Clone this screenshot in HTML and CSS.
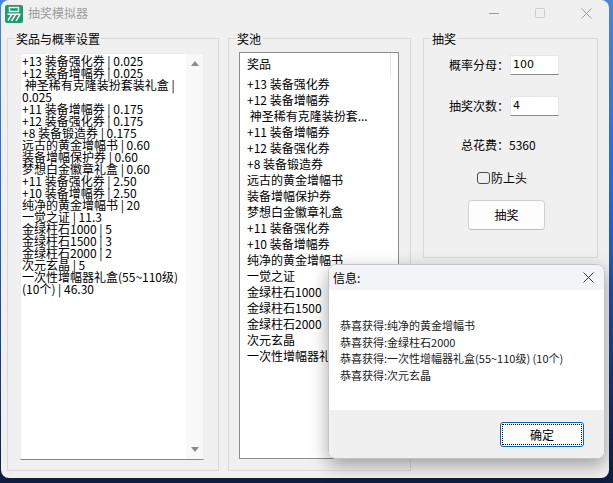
FILE: index.html
```html
<!DOCTYPE html>
<html lang="zh-CN">
<head>
<meta charset="utf-8">
<title>抽奖模拟器</title>
<link rel="stylesheet" href="styles.css">
</head>
<body>
<div class="window">
  <div class="titlebar">
    <svg class="appicon" viewBox="0 0 18 18" width="18" height="18">
      <rect x="0" y="0" width="18" height="18" rx="2" fill="#1f9b72"/>
      <rect x="4.5" y="2.5" width="9" height="4" fill="none" stroke="#fff" stroke-width="1.4"/>
      <path d="M2.5 9.2H15.5M7 9.2L3 15.5M11 9.2L6.5 16M15.2 9.2L11 16" stroke="#fff" stroke-width="1.4" fill="none"/>
    </svg>
    <span class="title">抽奖模拟器</span>
    <div class="controls">
      <span class="ctl">
        <svg viewBox="0 0 10 10" width="10" height="10"><path d="M0 5.5H10" stroke="#9a9a9a" stroke-width="1"/></svg>
      </span>
      <span class="ctl">
        <svg viewBox="0 0 10 10" width="10" height="10"><rect x="0.5" y="0.5" width="9" height="9" rx="1" fill="none" stroke="#cfcfcf" stroke-width="1"/></svg>
      </span>
      <span class="ctl">
        <svg viewBox="0 0 11 11" width="11" height="11"><path d="M0.5 0.5L10.5 10.5M10.5 0.5L0.5 10.5" stroke="#9a9a9a" stroke-width="1"/></svg>
      </span>
    </div>
  </div>

  <div class="content">
    <fieldset class="group g1">
      <legend>奖品与概率设置</legend>
      <div class="memo">
        <div class="memo-text">
          <div class="ln">+13 装备强化券 | 0.025</div>
          <div class="ln">+12 装备增幅券 | 0.025</div>
          <div class="ln"> 神圣稀有克隆装扮套装礼盒 |</div>
          <div class="ln">0.025</div>
          <div class="ln">+11 装备增幅券 | 0.175</div>
          <div class="ln">+12 装备强化券 | 0.175</div>
          <div class="ln">+8 装备锻造券 | 0.175</div>
          <div class="ln">远古的黄金增幅书 | 0.60</div>
          <div class="ln">装备增幅保护券 | 0.60</div>
          <div class="ln">梦想白金徽章礼盒 | 0.60</div>
          <div class="ln">+11 装备强化券 | 2.50</div>
          <div class="ln">+10 装备增幅券 | 2.50</div>
          <div class="ln">纯净的黄金增幅书 | 20</div>
          <div class="ln">一觉之证 | 11.3</div>
          <div class="ln">金绿柱石1000 | 5</div>
          <div class="ln">金绿柱石1500 | 3</div>
          <div class="ln">金绿柱石2000 | 2</div>
          <div class="ln">次元玄晶 | 5</div>
          <div class="ln">一次性增幅器礼盒(55~110级)</div>
          <div class="ln">(10个) | 46.30</div>
        </div>
        <div class="vscroll">
          <span class="arrow up"></span>
          <span class="arrow down"></span>
        </div>
      </div>
    </fieldset>

    <fieldset class="group g2">
      <legend>奖池</legend>
      <div class="listbox">
        <div class="lv-head"><span class="lv-col">奖品</span></div>
        <div class="item">+13 装备强化券</div>
        <div class="item">+12 装备增幅券</div>
        <div class="item"> 神圣稀有克隆装扮套...</div>
        <div class="item">+11 装备增幅券</div>
        <div class="item">+12 装备强化券</div>
        <div class="item">+8 装备锻造券</div>
        <div class="item">远古的黄金增幅书</div>
        <div class="item">装备增幅保护券</div>
        <div class="item">梦想白金徽章礼盒</div>
        <div class="item">+11 装备强化券</div>
        <div class="item">+10 装备增幅券</div>
        <div class="item">纯净的黄金增幅书</div>
        <div class="item">一觉之证</div>
        <div class="item">金绿柱石1000</div>
        <div class="item">金绿柱石1500</div>
        <div class="item">金绿柱石2000</div>
        <div class="item">次元玄晶</div>
        <div class="item">一次性增幅器礼盒(55~110级) (10个)</div>
      </div>
    </fieldset>

    <fieldset class="group g3">
      <legend>抽奖</legend>
      <div class="row r1"><span class="lbl">概率分母：</span><span class="input">100</span></div>
      <div class="row r2"><span class="lbl">抽奖次数：</span><span class="input">4</span></div>
      <div class="total">总花费：5360</div>
      <div class="check"><span class="box"></span><span>防上头</span></div>
      <div class="btn">抽奖</div>
    </fieldset>
  </div>
</div>

<div class="dialog">
  <div class="dlg-title">
    <span>信息:</span>
    <svg class="dlg-x" viewBox="0 0 11 11" width="11" height="11"><path d="M0.5 0.5L10.5 10.5M10.5 0.5L0.5 10.5" stroke="#333" stroke-width="1"/></svg>
  </div>
  <div class="dlg-body">
    <div>恭喜获得:纯净的黄金增幅书</div>
    <div>恭喜获得:金绿柱石2000</div>
    <div>恭喜获得:一次性增幅器礼盒(55~110级) (10个)</div>
    <div>恭喜获得:次元玄晶</div>
  </div>
  <div class="dlg-foot">
    <div class="ok">确定</div>
  </div>
</div>
</body>
</html>
```

FILE: styles.css
```css
* { box-sizing: border-box; }

body {
  margin: 0;
  width: 613px;
  height: 483px;
  overflow: hidden;
  position: relative;
  font-family: "Noto Sans CJK SC", "Noto Sans", sans-serif;
  font-size: 12px;
  color: #000;
  background: linear-gradient(to bottom, #4a86d8 0%, #1f67d2 42%, #1b4390 70%, #0f1d3d 100%);
}

.window {
  margin-left: 1px;
  width: 608px;
  height: 478px;
  background: #f0f0f0;
  border-radius: 8px;
  display: flex;
  flex-direction: column;
  overflow: hidden;
}

/* title bar */
.titlebar {
  height: 28px;
  display: flex;
  align-items: center;
  padding-left: 4px;
  flex: none;
}
.appicon { display: block; flex: none; }
.title {
  margin-left: 5px;
  color: #9c9c9c;
  font-size: 12px;
  line-height: 16px;
  margin-top: -2px;
}
.controls {
  margin-left: auto;
  display: flex;
  height: 28px;
}
.ctl {
  width: 46px;
  height: 26px;
  display: flex;
  align-items: center;
  justify-content: center;
}
.ctl svg { display: block; }

/* content */
.content {
  display: flex;
  align-items: flex-start;
  padding: 3px 0 0 6px;
}

.group {
  margin: 0;
  padding: 0;
  min-width: 0;
  border: 1px solid #d9d9d9;
  flex: none;
}
.group legend {
  margin-left: 7px;
  padding: 0 1px;
  font-size: 12px;
  line-height: 15px;
}
.g1 { width: 212px; height: 440px; }
.g2 { width: 183px; height: 440px; margin-left: 9px; }
.g3 { width: 175px; height: 227px; margin-left: 12px; }

/* memo (multi-line edit) */
.memo {
  margin: 7px 0 0 12px;
  width: 184px;
  height: 407px;
  background: #fff;
  border: 1px solid #ececec;
  border-bottom-color: #868686;
  display: flex;
}
.memo-text {
  flex: 1;
  padding: 1px 0 0 1px;
  overflow: hidden;
}
.ln {
  white-space: pre;
  font-size: 12px;
  line-height: 12px;
}
.vscroll {
  width: 17px;
  flex: none;
  background: #f8f8f8;
  display: flex;
  flex-direction: column;
  justify-content: space-between;
  align-items: center;
  padding: 7px 0 7px 0;
}
.arrow {
  width: 0;
  height: 0;
  border-left: 4px solid transparent;
  border-right: 4px solid transparent;
}
.arrow.up { border-bottom: 5px solid #8a8a8a; }
.arrow.down { border-top: 5px solid #8a8a8a; }

/* listbox / list view */
.listbox {
  margin: 6px 0 0 10px;
  width: 160px;
  height: 407px;
  background: #fff;
  border: 1px solid #8c8c8c;
  overflow: hidden;
}
.lv-head {
  height: 23px;
  display: flex;
}
.lv-col {
  width: 151px;
  border-right: 1px solid #e3e3e3;
  padding: 3px 0 0 7px;
  line-height: 16px;
}
.item {
  white-space: pre;
  line-height: 16px;
  height: 16px;
  padding-left: 7px;
}

/* draw panel */
.row {
  display: flex;
  align-items: center;
  height: 20px;
  padding-left: 25px;
}
.r1 { margin-top: 9px; }
.r2 { margin-top: 21px; }
.lbl { width: 61px; line-height: 16px; }
.input {
  width: 49px;
  height: 20px;
  background: #fff;
  border: 1px solid #e6e6e6;
  border-bottom-color: #8a8a8a;
  padding-left: 2px;
  font-family: "DejaVu Sans", sans-serif;
  font-size: 11px;
  line-height: 18px;
}
.total {
  margin-top: 21px;
  padding-left: 37px;
  line-height: 16px;
}
.check {
  margin-top: 17px;
  padding-left: 53px;
  display: flex;
  align-items: center;
  gap: 1px;
  line-height: 16px;
}
.box {
  width: 13px;
  height: 12px;
  border: 1px solid #4a4a4a;
  border-radius: 3px;
}
.btn {
  margin: 14px 0 0 44px;
  width: 77px;
  height: 30px;
  background: #fdfdfd;
  border: 1px solid #d0d0d0;
  border-bottom-color: #bcbcbc;
  border-radius: 4px;
  display: flex;
  align-items: center;
  justify-content: center;
  line-height: 16px;
}

/* message dialog (overlay) */
.dialog {
  position: absolute;
  left: 328px;
  top: 264px;
  width: 277px;
  height: 195px;
  border: 1px solid #c4c4c4;
  border-radius: 8px;
  overflow: hidden;
  box-shadow: 0 6px 18px rgba(0, 0, 0, 0.35);
  display: flex;
  flex-direction: column;
}
.dlg-title {
  height: 25px;
  flex: none;
  background: #f2f4f7;
  display: flex;
  align-items: center;
  padding: 0 10px 0 4px;
  font-size: 12px;
  line-height: 16px;
}
.dlg-x { margin-left: auto; display: block; }
.dlg-body {
  height: 120px;
  flex: none;
  background: #fff;
  padding: 27px 0 0 11px;
  font-size: 11px;
  line-height: 16.5px;
  color: #1a1a1a;
}
.dlg-foot {
  flex: 1;
  background: #f0f0f0;
  display: flex;
  justify-content: flex-end;
  align-items: flex-start;
  padding: 12px 20px 0 0;
}
.ok {
  width: 84px;
  height: 25px;
  background: #fdfdfd;
  border: 1px solid #0067c0;
  border-radius: 3px;
  outline: 1px dotted #000;
  outline-offset: -3px;
  display: flex;
  align-items: center;
  justify-content: center;
  font-size: 12px;
  line-height: 16px;
}
```
